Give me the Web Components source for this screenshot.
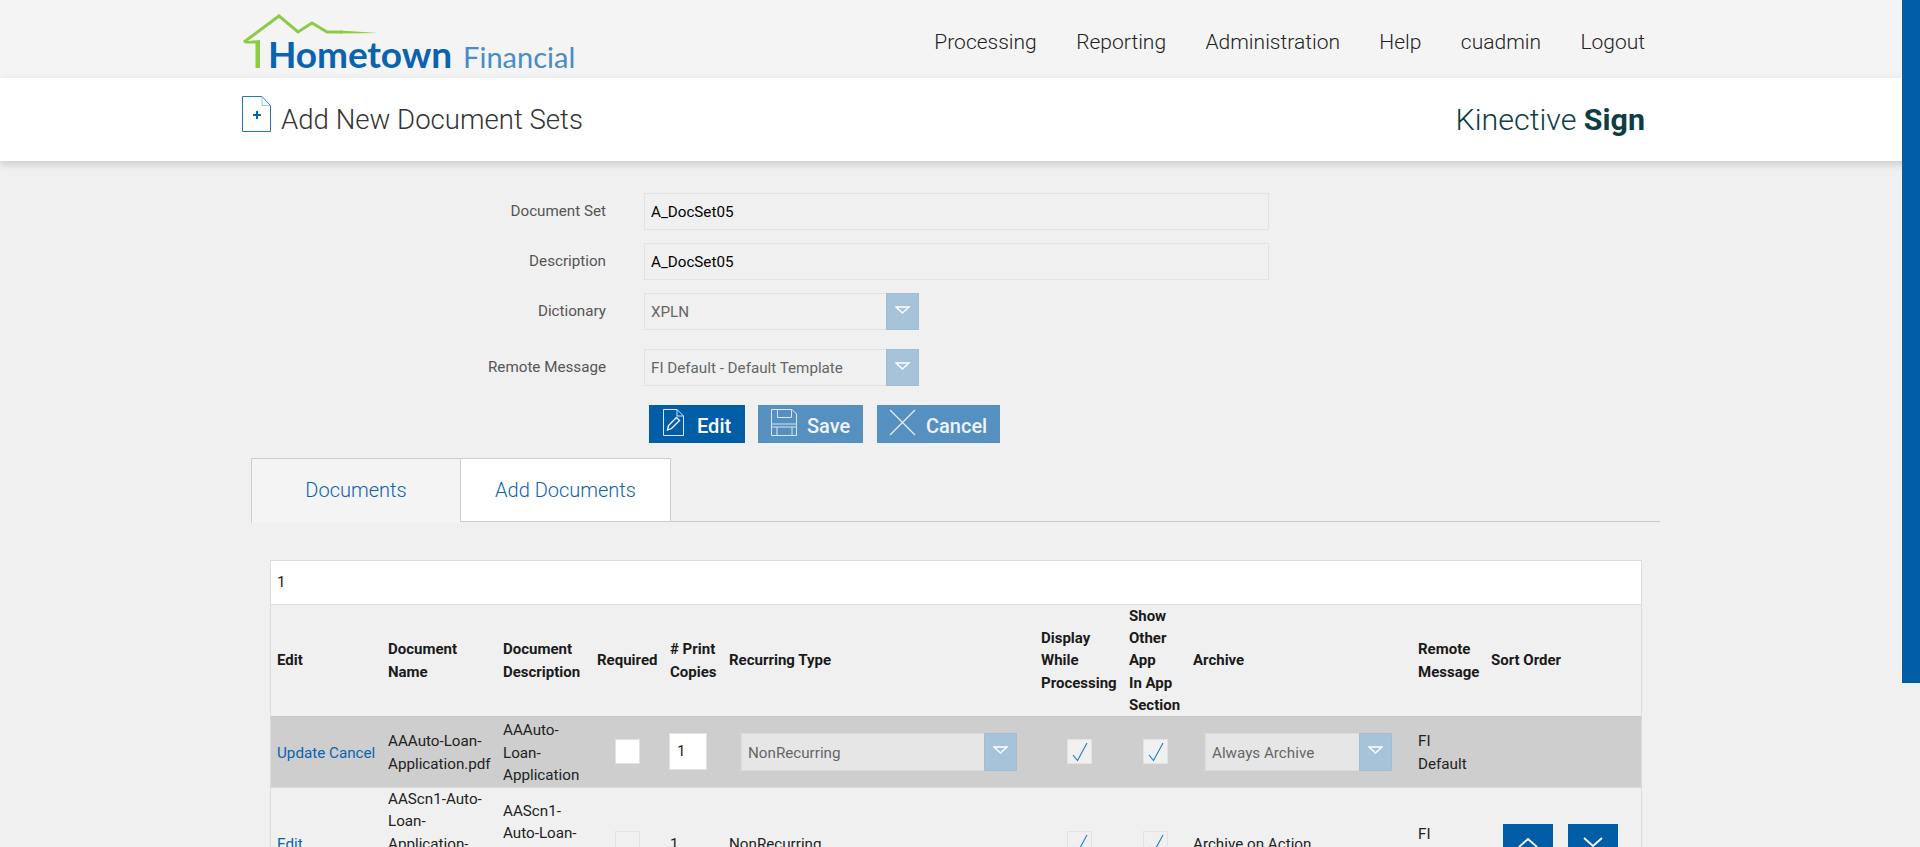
<!DOCTYPE html>
<html lang="en"><head><meta charset="utf-8"><title>Add New Document Sets</title>
<style>
html,body{margin:0;padding:0;height:847px;overflow:hidden;background:#f0f0f0;font-family:Roboto,"Liberation Sans",sans-serif;color:#222}
</style></head><body>
<app-page></app-page>
<script>
function def(name,css,html,init){
  customElements.define(name,class extends HTMLElement{
    constructor(){super();const s=this.attachShadow({mode:'open'});s.innerHTML='<style>'+css+'</style>'+(typeof html==='function'?html(this):html);}
    connectedCallback(){ if(init) init(this); }
  });
}
const caret='<svg width="15" height="8" viewBox="0 0 15 8"><path d="M1 1H14L7.5 7Z" fill="none" stroke="#fff" stroke-width="1.3"/></svg>';

def('app-logo',`:host{display:block;position:relative;width:340px;height:78px}
svg{position:absolute;left:0;top:0}
.t{position:absolute;left:26px;top:32px;white-space:nowrap;color:#0b63ae;line-height:44px}
b{font:700 37px/44px Lato,sans-serif;letter-spacing:-.1px}
span{font:400 29px/44px Lato,sans-serif;color:#4a8cc4;margin-left:11px}`,
`<svg width="290" height="78" viewBox="0 0 290 78"><path d="M2 42L37 16L56 32L70 23L85 32L100 32" fill="none" stroke="#8ccb45" stroke-width="3"/><path d="M98 30.5L136 33L98 33.5Z" fill="#8ccb45"/><path d="M1 41.5L18 40V68H13.5V43.5H4Z" fill="#8ccb45"/></svg><div class="t"><b>Hometown</b><span>Financial</span></div>`);

def('app-nav',`:host{display:flex;gap:39.4px;font:300 21px/24px Roboto,sans-serif;color:#222;margin-top:30px}`,
`<span>Processing</span><span>Reporting</span><span>Administration</span><span>Help</span><span>cuadmin</span><span>Logout</span>`);

def('top-bar',`:host{display:block;background:#f4f4f4;height:78px}
.w{width:1403px;margin-left:242px;display:flex;justify-content:space-between}`,
`<div class="w"><app-logo></app-logo><app-nav></app-nav></div>`);

def('title-bar',`:host{display:block;background:#fff;height:83px;box-shadow:0 3px 8px rgba(0,0,0,.16);position:relative}
.w{width:1403px;margin-left:242px;display:flex;align-items:flex-start;justify-content:space-between}
.l{display:flex;align-items:flex-start}
svg{margin-top:18px}
h1{margin:24px 0 0 10px;font:300 27.6px/36px Roboto,sans-serif;color:#333}
.k{font:300 30.4px/36px Roboto,sans-serif;color:#0c3e44;margin-top:24px}
b{font-weight:700}`,
`<div class="w"><div class="l"><svg width="29" height="36" viewBox="0 0 29 36"><path d="M.5.5H20L28.5 9.5V35.5H.5Z" fill="#fff" stroke="#1f79b8"/><path d="M20 .5V9.5H28.5" fill="none" stroke="#9cc3de"/><path d="M11 19H19M15 15V23" stroke="#0b63ae" stroke-width="2"/></svg><h1>Add New Document Sets</h1></div><div class="k">Kinective <b>Sign</b></div></div>`);

def('form-row',`:host{display:flex;align-items:flex-start}
label{width:606px;padding-top:8px;box-sizing:border-box;text-align:right;font:400 15.2px/20px Roboto,sans-serif;color:#555;flex:none}
.f{margin-left:38px;box-sizing:border-box;height:37px;border:1px solid #e2e2e2;background:#f0f0f0;font:400 15.2px/36px Roboto,sans-serif;padding-left:6px;color:#000;position:relative}
:host([select]) .f{color:#666}`,
h=>`<label>${h.getAttribute('label')}</label><div class="f" style="width:${h.getAttribute('w')}px">${h.getAttribute('value')}${h.hasAttribute('select')?`<drop-arrow></drop-arrow>`:''}</div>`);

def('drop-arrow',`:host{position:absolute;right:-1px;top:-1px;width:33px;height:37px;background:#a6c3da;display:flex;align-items:center;justify-content:center;border:1px solid #9fbdd6;box-sizing:border-box}
svg{margin-bottom:3px}`,caret);

def('doc-form',`:host{display:block}
.s{display:flex;flex-direction:column}
form-row+form-row{margin-top:13px}
form-row.gap{margin-top:19px}
.b{display:flex;margin:19px 0 0 649px}
a-btn+a-btn{margin-left:13px}
a-btn.c{margin-left:14px}`,
`<div class="s">
<form-row label="Document Set" w="625" value="A_DocSet05"></form-row>
<form-row label="Description" w="625" value="A_DocSet05"></form-row>
<form-row label="Dictionary" w="275" value="XPLN" select></form-row>
<form-row class="gap" label="Remote Message" w="275" value="FI Default - Default Template" select></form-row>
</div>
<div class="b">
<a-btn style="width:96px" label="Edit" icon="edit" active></a-btn>
<a-btn style="width:105px" label="Save" icon="save"></a-btn>
<a-btn class="c" style="width:123px" label="Cancel" icon="x"></a-btn>
</div>`);

const icons={
edit:'<svg width="21" height="27" viewBox="0 0 21 27"><path d="M.5.5H14L20.5 7V26.5H.5Z" fill="none" stroke="#d5e6f2" stroke-width="1"/><path d="M14 .5V7H20.5" fill="none" stroke="#d5e6f2"/><path d="M4.5 21L5.5 16.5L13.5 8.5L16.5 11.5L8.5 19.5Z" fill="none" stroke="#fff" stroke-width="1.3"/></svg>',
save:'<svg width="26" height="27" viewBox="0 0 26 27"><path d="M.5.5H21L25.5 5V26.5H.5Z" fill="none" stroke="#d9e6f1"/><path d="M6.5 .5V8.5H20.5V.5M.5 15H25.5M.5 18H25.5M6 18V26.5M21 18V26.5" fill="none" stroke="#d9e6f1" stroke-width="1"/></svg>',
x:'<svg width="27" height="27" viewBox="0 0 27 27"><path d="M1 1L26 26M26 1L1 26" stroke="#e6eff6" stroke-width="1.2"/></svg>'};
const iw={edit:14,save:13,x:12};
const ig={edit:13,save:10,x:10};
def('a-btn',`:host{display:block;height:38px;background:#5590c1;color:#eef4f9;box-sizing:border-box;font:500 20px/38px Roboto,sans-serif;position:relative}
:host([active]){background:#015ea6;color:#fff}
.i{display:flex;height:38px}
svg{margin-top:4px;flex:none}
span{padding-top:2px;line-height:38px;height:36px}`,
h=>{const k=h.getAttribute('icon');return `<div class="i" style="padding-left:${iw[k]}px">${icons[k]}<span style="margin-left:${ig[k]}px">${h.getAttribute('label')}</span></div>`});

def('doc-tabs',`:host{margin:15px 0 0 251px;width:1409px;height:64px;border-bottom:1px solid #ccc;box-sizing:border-box;display:flex;font:300 20px/62px Roboto,sans-serif;color:#0b63ae}
div{height:64px;text-align:center;box-sizing:border-box;border:1px solid #ccc;border-bottom:0;flex:none}
.a{width:209px;background:#f4f4f4;border-right:0;height:65px}
.b{width:211px;background:#fff;height:64px;border-bottom:1px solid #ccc}`,
`<div class="a">Documents</div><div class="b">Add Documents</div>`);

def('check-box',`:host{display:inline-block;width:25px;height:25px;box-sizing:border-box;background:#f0f0f0;border:1px solid #e2e2e2;vertical-align:middle}
:host([blank]){background:#fff}
svg{display:block;margin:2px 0 0 4px}`,
h=>h.hasAttribute('on')?`<svg width="17" height="20" viewBox="0 0 17 20"><path d="M1 13L5.5 18.5L15 1" fill="none" stroke="#1c7fc4" stroke-width="1.1"/></svg>`:'');

def('cell-select',`:host{display:block;position:relative;box-sizing:border-box;height:38px;border:1px solid #dcdcdc;background:#e6e6e6;font:400 15.2px/38px Roboto,sans-serif;color:#666;padding-left:6px}`,
h=>`${h.getAttribute('value')}<drop-arrow style="height:38px"></drop-arrow>`);

def('sort-btn',`:host{display:inline-block;width:50px;height:38px;background:#015ea6;vertical-align:top}
svg{display:block;margin:13px auto 0}`,
h=>`<svg width="20" height="11" viewBox="0 0 20 11"><path d="${h.getAttribute('dir')==='up'?'M1 10L10 2L19 10':'M1 1L10 9L19 1'}" fill="none" stroke="#fff" stroke-width="1.8"/></svg>`);

def('doc-grid',`:host{display:block;margin:38px 0 0 270px;width:1372px}
.box{border:1px solid #dcdcdc;border-bottom:0;box-sizing:border-box;width:1372px}
.pg{background:#fff;height:44px;border-bottom:1px solid #dcdcdc;box-sizing:border-box;font:400 15.2px/43px Roboto,sans-serif;padding-left:6px;color:#222}
table{border-collapse:collapse;table-layout:fixed;width:1370px;font:400 15.2px/22.5px Roboto,sans-serif;color:#222}
th{font-weight:700;font-size:15px;line-height:22.2px;text-align:left;color:#1a1a1a;padding:0 0 0 6px;height:111px;vertical-align:middle;box-sizing:border-box}
td{padding:0 0 0 6px;vertical-align:middle;box-sizing:border-box}
.ed{background:#cecece}
.ed td{height:70px;border-top:1px solid #c8c8c8;border-bottom:1px solid #d8d8d8}
td.t{padding-top:2px}
a{color:#0b63ae;text-decoration:none}
.c{text-align:center;padding-left:0}
.qty{display:inline-block;box-sizing:border-box;width:38px;height:37px;background:#fff;border:1px solid #e2e2e2;line-height:35px;padding-left:7px;vertical-align:middle}
.top{vertical-align:top}
.r2 td{height:112px}
.sort{white-space:nowrap;padding:36px 0 0 18px;vertical-align:top}
sort-btn+sort-btn{margin-left:15px}`,
`<div class="box"><div class="pg">1</div>
<table><colgroup><col style="width:111px"><col style="width:115px"><col style="width:94px"><col style="width:73px"><col style="width:59px"><col style="width:312px"><col style="width:88px"><col style="width:64px"><col style="width:225px"><col style="width:73px"><col style="width:156px"></colgroup>
<tr><th>Edit</th><th>Document<br>Name</th><th>Document<br>Description</th><th>Required</th><th># Print<br>Copies</th><th>Recurring Type</th><th>Display<br>While<br>Processing</th><th>Show<br>Other<br>App<br>In App<br>Section</th><th>Archive</th><th>Remote<br>Message</th><th>Sort Order</th></tr>
<tr class="ed"><td class="t"><a href="#">Update</a> <a href="#">Cancel</a></td><td class="t">AAAuto-Loan-<br>Application.pdf</td><td class="t">AAAuto-<br>Loan-<br>Application</td><td class="c"><check-box blank></check-box></td><td style="padding-left:5px"><span class="qty">1</span></td><td style="padding:0 18px 0 18px"><cell-select value="NonRecurring"></cell-select></td><td class="c"><check-box on></check-box></td><td class="c"><check-box on></check-box></td><td style="padding:0 20px 0 18px"><cell-select value="Always Archive"></cell-select></td><td class="t">FI<br>Default</td><td></td></tr>
<tr class="r2"><td class="t"><a href="#">Edit</a></td><td class="top">AAScn1-Auto-<br>Loan-<br>Application-</td><td class="top" style="padding-top:12px">AAScn1-<br>Auto-Loan-</td><td class="c"><check-box></check-box></td><td class="t">1</td><td class="t">NonRecurring</td><td class="c"><check-box on></check-box></td><td class="c"><check-box on></check-box></td><td class="t">Archive on Action</td><td class="top" style="padding-top:35px">FI</td><td class="sort"><sort-btn dir="up"></sort-btn><sort-btn dir="down"></sort-btn></td></tr>
</table></div>`);

def('page-scroll',`:host{position:fixed;right:0;top:0;width:18px;height:847px;background:#f0f0f0;display:block}
div{height:683px;background:#015ea6}`,`<div></div>`);

def('app-page',`:host{display:block;height:847px;overflow:hidden;position:relative}
doc-form{margin-top:32px}`,
`<top-bar></top-bar><title-bar></title-bar><doc-form></doc-form><doc-tabs></doc-tabs><doc-grid></doc-grid><page-scroll></page-scroll>`);
</script>
</body></html>
